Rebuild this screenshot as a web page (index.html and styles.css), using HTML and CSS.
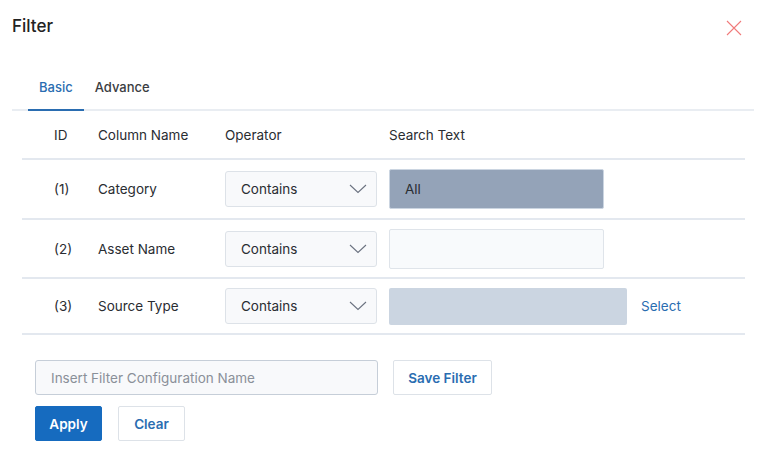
FILE: index.html
```html
<!DOCTYPE html>
<html>
<head>
	<title>Filter</title>
	<link rel="stylesheet" href="styles.css">
</head>
<body>
	<div class="dialog">
		<div class="head">
			<h1>Filter</h1>
			<span class="close">
				<svg width="16" height="16" viewBox="0 0 16 16"><path d="M1 1L15 15M15 1L1 15" stroke="#f07a7a" stroke-width="1.1" fill="none"/></svg>
			</span>
		</div>

		<div class="tabs">
			<span class="tab active">Basic</span>
			<span class="tab">Advance</span>
		</div>

		<div class="table">
			<div class="row header">
				<div class="c-id">ID</div>
				<div class="c-name">Column Name</div>
				<div class="c-op">Operator</div>
				<div class="c-search">Search Text</div>
			</div>
			<div class="row">
				<div class="c-id">(1)</div>
				<div class="c-name">Category</div>
				<div class="c-op">
					<div class="select">Contains
						<svg width="18" height="10" viewBox="0 0 18 10"><path d="M1 1L9 8.5L17 1" stroke="#6b7280" stroke-width="1.1" fill="none"/></svg>
					</div>
				</div>
				<div class="c-search"><div class="field dark">All</div></div>
			</div>
			<div class="row second">
				<div class="c-id">(2)</div>
				<div class="c-name">Asset Name</div>
				<div class="c-op">
					<div class="select">Contains
						<svg width="18" height="10" viewBox="0 0 18 10"><path d="M1 1L9 8.5L17 1" stroke="#6b7280" stroke-width="1.1" fill="none"/></svg>
					</div>
				</div>
				<div class="c-search"><div class="field empty"></div></div>
			</div>
			<div class="row short">
				<div class="c-id">(3)</div>
				<div class="c-name">Source Type</div>
				<div class="c-op">
					<div class="select">Contains
						<svg width="18" height="10" viewBox="0 0 18 10"><path d="M1 1L9 8.5L17 1" stroke="#6b7280" stroke-width="1.1" fill="none"/></svg>
					</div>
				</div>
				<div class="c-search">
					<div class="field light"></div>
					<a class="link">Select</a>
				</div>
			</div>
		</div>

		<div class="save-row">
			<div class="name-input">Insert Filter Configuration Name</div>
			<button class="btn">Save Filter</button>
		</div>
		<div class="actions">
			<button class="btn primary">Apply</button>
			<button class="btn">Clear</button>
		</div>
	</div>
</body>
</html>
```
FILE: styles.css
```css
body {
	margin: 0;
	font-family: Inter, "Noto Sans", sans-serif;
	font-size: 13.5px;
	color: #2a2d32;
	background: #fff;
}

.dialog {
	width: 762px;
	height: 456px;
	padding: 0 8px 0 12px;
	box-sizing: border-box;
}

.head {
	display: flex;
	justify-content: space-between;
	align-items: center;
	height: 52px;
}

.head h1 {
	margin: 0;
	font-size: 17px;
	font-weight: 500;
	color: #222;
}

.close {
	display: flex;
	margin-right: 12px;
	margin-top: 4px;
}

.tabs {
	display: flex;
	margin-top: 15px;
	border-bottom: 2px solid #e9edf2;
	height: 44px;
	box-sizing: border-box;
}

.tab {
	padding: 12px 11px 0;
	margin-bottom: -2px;
	font-size: 13px;
	font-weight: 500;
	color: #3a3d42;
}

.tab.active {
	margin-left: 16px;
	color: #2a6db1;
	border-bottom: 2px solid #2a6db1;
}

.table {
	margin: 0 9px 0 10px;
}

.row {
	display: flex;
	align-items: center;
	height: 60px;
	box-sizing: border-box;
	border-bottom: 2px solid #e3e8ef;
}

.row.header {
	height: 49px;
}

.row.second {
	height: 59px;
}

.row.short {
	height: 56px;
}

.c-id {
	width: 76px;
	padding-left: 32px;
	box-sizing: border-box;
}

.c-name {
	width: 127px;
}

.c-op {
	width: 164px;
}

.c-search {
	display: flex;
	align-items: center;
	flex: 1;
}

.select {
	display: flex;
	justify-content: space-between;
	align-items: center;
	width: 152px;
	height: 36px;
	padding: 0 9px 0 15px;
	box-sizing: border-box;
	background: #f8f9fb;
	border: 1px solid #dde2e8;
	border-radius: 3px;
}

.field {
	width: 215px;
	height: 40px;
	box-sizing: border-box;
	border: 1px solid #dfe4ea;
	border-radius: 2px;
	padding: 0 15px;
	display: flex;
	align-items: center;
}

.field.dark {
	background: #94a3b8;
	border-color: #cbd5e1;
}

.field.empty {
	background: #f8fafc;
}

.field.light {
	width: 238px;
	height: 37px;
	background: #cbd5e1;
	border: none;
}

.link {
	margin-left: 14px;
	color: #2a6db1;
}

.save-row {
	display: flex;
	align-items: center;
	margin: 25px 0 0 23px;
}

.name-input {
	width: 343px;
	height: 35px;
	box-sizing: border-box;
	padding: 0 15px;
	display: flex;
	align-items: center;
	background: #f8f9fb;
	border: 1px solid #c6ced8;
	border-radius: 3px;
	color: #8a9099;
}

.btn {
	font-family: inherit;
	font-size: 13.5px;
	font-weight: 600;
	color: #2a6db1;
	background: #fff;
	border: 1px solid #dde2e8;
	border-radius: 2px;
	height: 35px;
	padding: 0;
	white-space: nowrap;
}

.save-row .btn {
	margin-left: 15px;
	width: 99px;
}

.actions {
	display: flex;
	gap: 16px;
	margin: 11px 0 0 23px;
}

.actions .btn {
	width: 67px;
	height: 35px;
}

.btn.primary {
	background: #166bbf;
	border-color: #166bbf;
	color: #fff;
}
```
